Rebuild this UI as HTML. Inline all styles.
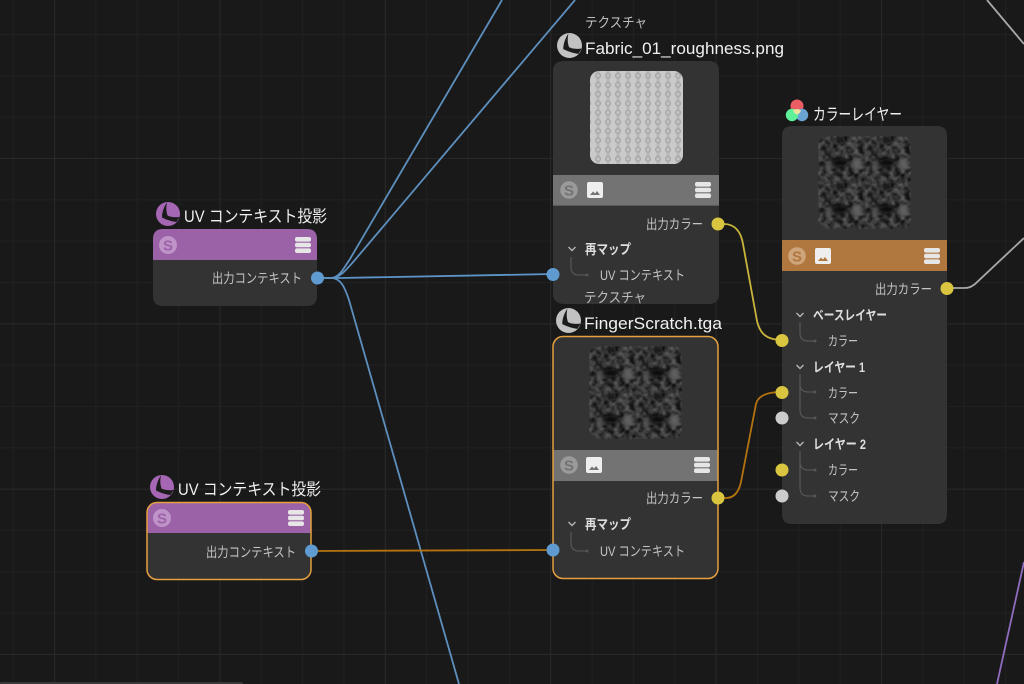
<!DOCTYPE html>
<html lang="ja"><head><meta charset="utf-8"><title>Node graph</title>
<style>
html,body{margin:0;padding:0;background:#191919;width:1024px;height:684px;overflow:hidden}
svg{display:block;position:absolute;left:0;top:0}
text{font-family:"Liberation Sans","Noto Sans CJK JP",sans-serif}
.t{font-size:16.500px;fill:#f0f0f0}
.s{font-size:14px;fill:#bdbdbd}
.l{font-size:13.500px;fill:#c4c4c4}
.b{font-size:13.500px;fill:#dedede;font-weight:700}
.tree{fill:none;stroke:#565656;stroke-width:1.2}
.chev{fill:none;stroke:#b5b5b5;stroke-width:1.4}
.sl{font-size:15px;font-weight:700;text-anchor:middle}
</style></head><body>
<svg width="1024" height="684" viewBox="0 0 1024 684" xmlns="http://www.w3.org/2000/svg">
<defs>
<pattern id="g1" patternUnits="userSpaceOnUse" x="54" y="34" width="41.35" height="41.33"><path d="M.5 0V41.33M0 .5H41.35" stroke="#212121" stroke-width="1" fill="none"/></pattern>
<pattern id="g2" patternUnits="userSpaceOnUse" x="54" y="158" width="165.4" height="165.33"><path d="M.5 0V165.33M0 .5H165.4" stroke="#282828" stroke-width="1" fill="none"/></pattern>
<pattern id="fab" patternUnits="userSpaceOnUse" x="593" y="71" width="10" height="9.25">
<rect width="10" height="9.250" fill="#cacaca"/>
<rect x="3.500" width="3" height="9.250" fill="#b8b8b8"/>
<circle cx="5" cy="4.600" r="2.400" fill="#c2c2c2" stroke="#a8a8a8" stroke-width="1.400"/>
</pattern>
<filter id="nz" x="0" y="0" width="100%" height="100%" color-interpolation-filters="sRGB">
<feTurbulence type="fractalNoise" baseFrequency=".2" numOctaves="2" seed="7" stitchTiles="stitch" result="n"/>
<feColorMatrix in="n" type="matrix" values=".6 0 0 0 -.1 .6 0 0 0 -.1 .6 0 0 0 -.1 0 0 0 0 1"/>
<feGaussianBlur stdDeviation=".4"/>
</filter>
<filter id="bl"><feGaussianBlur stdDeviation="1.6"/></filter>
<g id="tile">
<rect width="46.500" height="46.500" fill="#333" filter="url(#nz)"/>
<g filter="url(#bl)"><ellipse cx="22" cy="27" rx="8" ry="4" fill="#0c0c0c"/><ellipse cx="39" cy="28" rx="5" ry="6" fill="#5e5e5e"/><ellipse cx="10" cy="31" rx="3" ry="4" fill="#555"/><ellipse cx="33" cy="8" rx="5" ry="1.500" fill="#6e6e6e"/><ellipse cx="22" cy="5" rx="6" ry="2" fill="#141414"/><ellipse cx="8" cy="43" rx="2" ry="3" fill="#666"/></g>
</g>
<pattern id="dk1" patternUnits="userSpaceOnUse" x="589" y="346" width="46.5" height="46.5"><use href="#tile"/></pattern>
<pattern id="dk2" patternUnits="userSpaceOnUse" x="818" y="136" width="46.5" height="46.5"><use href="#tile"/></pattern>
<symbol id="mat" viewBox="0 0 24 24" overflow="visible">
<circle cx="12" cy="12" r="12" fill="currentColor"/>
<path d="M11 .3C8 5 6 10 6 15.500 11 18 16 19.500 20.500 20L23.700 15C19 15.500 14 15 11.500 13.500 10 9 10 5 11 .3Z" fill="#1b1b1b"/>
</symbol>
<symbol id="ham" viewBox="0 0 16 16" overflow="visible">
<rect x="0" y="0" width="16" height="4.600" rx="2" fill="#e6e6e6"/><rect x="0" y="5.700" width="16" height="4.600" rx="2" fill="#e6e6e6"/><rect x="0" y="11.400" width="16" height="4.600" rx="2" fill="#e6e6e6"/>
</symbol>
<symbol id="pic" viewBox="0 0 16 16" overflow="visible">
<rect width="16" height="16" rx="2" fill="#eeeeee"/>
</symbol>
</defs>

<rect width="1024" height="684" fill="#191919"/>
<rect width="1024" height="684" fill="url(#g1)"/>
<rect width="1024" height="684" fill="url(#g2)"/>

<!-- wires behind -->
<g fill="none" stroke-width="1.800">
<path d="M318 278H331C339 278 344 268 350 259L502 0" stroke="#5d8fbe"/>
<path d="M318 278H331C340 278 346 270 354 261L575 0" stroke="#5d8fbe"/>
<path d="M318 278H340L553 274" stroke="#5d95c8"/>
<path d="M318 278H331C341 278 345 288 349 300L459 684" stroke="#5d8fbe"/>
<path d="M718 224H724C735 224 741 232 743 244L757 321C760 334 767 340 782 340" stroke="#c9b43c"/>
<path d="M718 498H726C735 498 739 491 741 482L756 404C758 396 766 392 782 392" stroke="#b4730f"/>
<path d="M311 551L553 550" stroke="#b4730f"/>
<path d="M947 288H964C969 288 971 287 975 284L1024 238" stroke="#a8a8a8"/>
<path d="M987 0L1024 44" stroke="#a8a8a8"/>
<path d="M1024 562L997 684" stroke="#8f6cc0"/>
</g>
<rect x="0" y="682" width="243" height="3" rx="2" fill="#383838"/>

<!-- UV node A -->
<use href="#mat" x="156" y="202" width="24" height="24" color="#a567b4"/>
<text class="t" x="184" y="222" textLength="143" lengthAdjust="spacingAndGlyphs">UV コンテキスト投影</text>
<path d="M163 229H307Q317 229 317 239V260H153V239Q153 229 163 229Z" fill="#9c62a8"/>
<path d="M153 260H317V296Q317 306 307 306H163Q153 306 153 296Z" fill="#333"/>
<circle cx="168" cy="245" r="9" fill="#bf93c8"/><text class="sl" x="168" y="250.500" fill="#9c62a8">S</text>
<use href="#ham" x="295" y="237" width="16" height="16"/>
<text class="l" x="212" y="283" textLength="90" lengthAdjust="spacingAndGlyphs">出力コンテキスト</text>

<!-- UV node B -->
<use href="#mat" x="150" y="475" width="24" height="24" color="#a567b4"/>
<text class="t" x="178" y="495" textLength="143" lengthAdjust="spacingAndGlyphs">UV コンテキスト投影</text>
<path d="M157 503H301Q311 503 311 513V533H147V513Q147 503 157 503Z" fill="#9c62a8"/>
<path d="M147 533H311V569Q311 579 301 579H157Q147 579 147 569Z" fill="#333"/>
<rect x="147" y="502.500" width="164" height="77" rx="10" fill="none" stroke="#e6a03f" stroke-width="1.500"/>
<circle cx="162" cy="518" r="9" fill="#bf93c8"/><text class="sl" x="162" y="523.500" fill="#9c62a8">S</text>
<use href="#ham" x="288" y="510" width="16" height="16"/>
<text class="l" x="206" y="557" textLength="90" lengthAdjust="spacingAndGlyphs">出力コンテキスト</text>

<!-- Texture 1 -->
<text class="s" x="585" y="27.500" textLength="62" lengthAdjust="spacingAndGlyphs">テクスチャ</text>
<use href="#mat" x="557" y="33" width="25" height="25" color="#c2c2c2"/>
<text class="t" x="585" y="54" textLength="199" lengthAdjust="spacingAndGlyphs">Fabric_01_roughness.png</text>
<path d="M565 61H709Q719 61 719 71V175H553V71Q553 61 565 61Z" fill="#333"/>
<rect x="590" y="71" width="93" height="93" rx="9" fill="url(#fab)"/>
<rect x="553" y="175" width="166" height="31" fill="#737373"/>
<rect x="553" y="205" width="166" height="1" fill="#5a5a5a"/>
<path d="M553 206H719V294Q719 304 709 304H565Q553 304 553 294Z" fill="#333"/>
<circle cx="569" cy="190" r="8.800" fill="#9a9a9a"/><text class="sl" x="569" y="195.500" fill="#737373">S</text>
<use href="#pic" x="587" y="182" width="16" height="16"/><path d="M590 195L593 191.500 595 193.500 597 191 600 195Z" fill="#737373"/>
<use href="#ham" x="695" y="182" width="16" height="16"/>
<text class="l" x="646" y="229" textLength="57" lengthAdjust="spacingAndGlyphs">出力カラー</text>
<path class="chev" d="M568.500 247L572 250.500 575.500 247"/>
<text class="b" x="585" y="254" textLength="46" lengthAdjust="spacingAndGlyphs">再マップ</text>
<path class="tree" d="M571 257V267Q571 275 579 275H586"/><circle cx="587" cy="275" r="1.500" fill="#565656"/>
<text class="l" x="600" y="280" textLength="85" lengthAdjust="spacingAndGlyphs">UV コンテキスト</text>
<text class="s" x="584" y="302.500" textLength="62" lengthAdjust="spacingAndGlyphs">テクスチャ</text>

<!-- Texture 2 -->
<use href="#mat" x="556" y="308" width="25" height="25" color="#c2c2c2"/>
<text class="t" x="584" y="329" textLength="138" lengthAdjust="spacingAndGlyphs">FingerScratch.tga</text>
<path d="M564 337H708Q718 337 718 347V450H553V347Q553 337 564 337Z" fill="#333"/>
<rect x="589" y="346" width="93" height="93" rx="9" fill="url(#dk1)"/>
<rect x="553" y="450" width="165" height="31" fill="#737373"/>
<path d="M553 481H718V568Q718 578 708 578H564Q553 578 553 568Z" fill="#333"/>
<rect x="553" y="336.500" width="165" height="242" rx="10" fill="none" stroke="#e6a03f" stroke-width="1.500"/>
<circle cx="569" cy="465" r="8.800" fill="#9a9a9a"/><text class="sl" x="569" y="470.500" fill="#737373">S</text>
<use href="#pic" x="586" y="457" width="16" height="16"/><path d="M589 470L592 466.500 594 468.500 596 466 599 470Z" fill="#737373"/>
<use href="#ham" x="694" y="457" width="16" height="16"/>
<text class="l" x="646" y="503" textLength="57" lengthAdjust="spacingAndGlyphs">出力カラー</text>
<path class="chev" d="M568.500 522L572 525.500 575.500 522"/>
<text class="b" x="585" y="529" textLength="46" lengthAdjust="spacingAndGlyphs">再マップ</text>
<path class="tree" d="M571 532V543Q571 551 579 551H586"/><circle cx="587" cy="551" r="1.500" fill="#565656"/>
<text class="l" x="600" y="556" textLength="85" lengthAdjust="spacingAndGlyphs">UV コンテキスト</text>

<!-- Color layer -->
<circle cx="797" cy="106" r="6.500" fill="#ec5d63"/>
<circle cx="802" cy="115" r="6.200" fill="#6aa4d4"/>
<circle cx="792" cy="115" r="6.200" fill="#5ff09a"/>
<path d="M793 110.500A6 6 0 0 1 801 110.500 6 6 0 0 1 797 114.500 6 6 0 0 1 793 110.500Z" fill="#efe3a0"/>
<text class="t" x="813" y="120" textLength="89" lengthAdjust="spacingAndGlyphs">カラーレイヤー</text>
<path d="M792 126H937Q947 126 947 136V240H782V136Q782 126 792 126Z" fill="#333"/>
<rect x="818" y="136" width="93" height="93" rx="9" fill="url(#dk2)"/>
<rect x="782" y="240" width="165" height="31" fill="#b0783f"/>
<path d="M782 271H947V514Q947 524 937 524H792Q782 524 782 514Z" fill="#333"/>
<circle cx="797" cy="256" r="8.800" fill="#cfa57c"/><text class="sl" x="797" y="261.500" fill="#b0783f">S</text>
<use href="#pic" x="815" y="248" width="16" height="16"/><path d="M818 261L821 257.500 823 259.500 825 257 828 261Z" fill="#b0783f"/>
<use href="#ham" x="924" y="248" width="16" height="16"/>
<text class="l" x="875" y="294" textLength="57" lengthAdjust="spacingAndGlyphs">出力カラー</text>

<path class="chev" d="M796.500 313L800 316.500 803.500 313"/>
<text class="b" x="813" y="320" textLength="74" lengthAdjust="spacingAndGlyphs">ベースレイヤー</text>
<path class="tree" d="M800 322V333Q800 341 808 341H814"/><circle cx="815" cy="341" r="1.500" fill="#565656"/>
<text class="l" x="828" y="346" textLength="30" lengthAdjust="spacingAndGlyphs">カラー</text>

<path class="chev" d="M796.500 365L800 368.500 803.500 365"/>
<text class="b" x="813" y="372" textLength="52" lengthAdjust="spacingAndGlyphs">レイヤー 1</text>
<path class="tree" d="M800 374V410Q800 418 808 418H814M800 384Q800 392 808 392H814"/><circle cx="815" cy="392" r="1.500" fill="#565656"/><circle cx="815" cy="418" r="1.500" fill="#565656"/>
<text class="l" x="828" y="398" textLength="30" lengthAdjust="spacingAndGlyphs">カラー</text>
<text class="l" x="828" y="423" textLength="32" lengthAdjust="spacingAndGlyphs">マスク</text>

<path class="chev" d="M796.500 442L800 445.500 803.500 442"/>
<text class="b" x="813" y="449" textLength="53" lengthAdjust="spacingAndGlyphs">レイヤー 2</text>
<path class="tree" d="M800 451V487Q800 496 808 496H814M800 461Q800 470 808 470H814"/><circle cx="815" cy="470" r="1.500" fill="#565656"/><circle cx="815" cy="496" r="1.500" fill="#565656"/>
<text class="l" x="828" y="475" textLength="30" lengthAdjust="spacingAndGlyphs">カラー</text>
<text class="l" x="828" y="501" textLength="32" lengthAdjust="spacingAndGlyphs">マスク</text>

<!-- ports -->
<g fill="#5f9bd0"><circle cx="317.500" cy="278" r="6.500"/><circle cx="311.500" cy="551" r="6.500"/><circle cx="553" cy="274.500" r="6.500"/><circle cx="553" cy="550" r="6.500"/></g>
<g fill="#dac541"><circle cx="718" cy="224" r="6.500"/><circle cx="718" cy="498" r="6.500"/><circle cx="947" cy="288.500" r="6.500"/><circle cx="782" cy="340.500" r="6.500"/><circle cx="782" cy="392.500" r="6.500"/><circle cx="782" cy="470" r="6.500"/></g>
<g fill="#cbcbcb"><circle cx="782" cy="418" r="6.500"/><circle cx="782" cy="496" r="6.500"/></g>
</svg>
</body></html>
